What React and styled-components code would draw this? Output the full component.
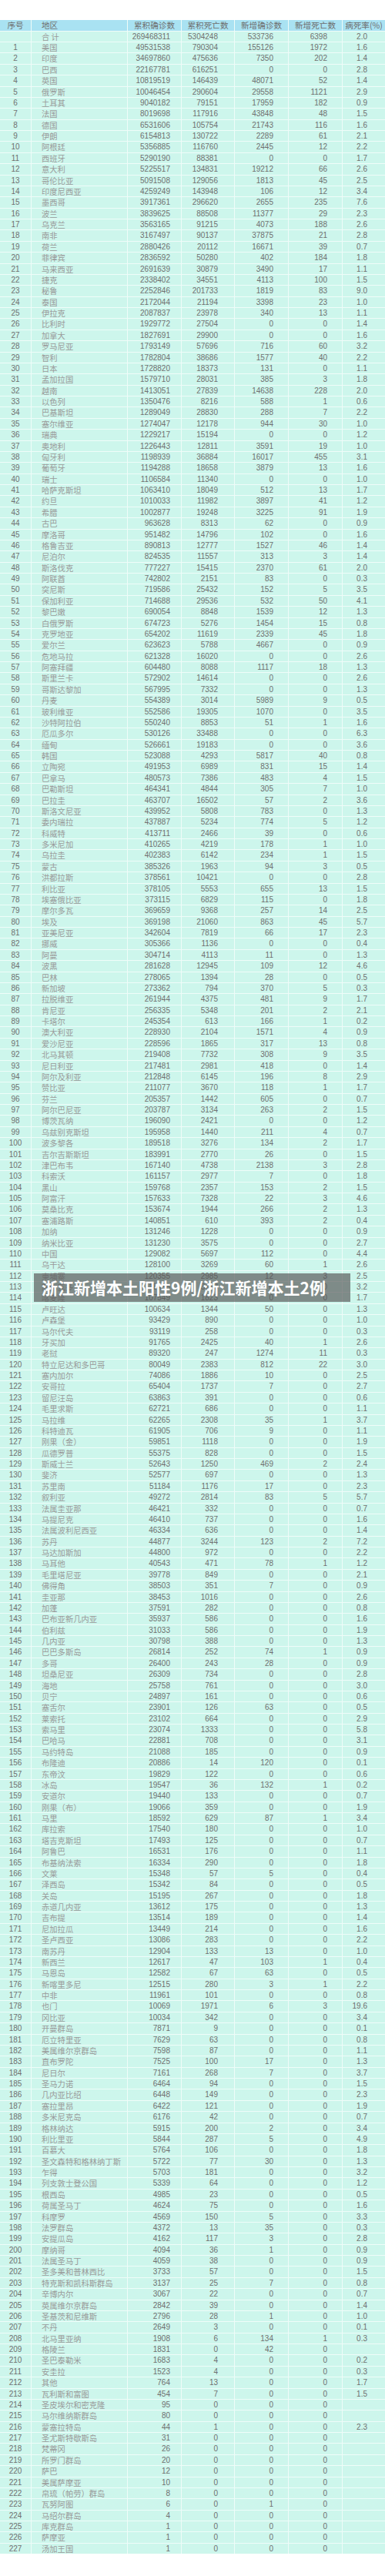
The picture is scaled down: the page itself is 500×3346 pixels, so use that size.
import React from 'react'

import styled, { createGlobalStyle } from 'styled-components'

const raw = `1|美国|49531538|790304|155126|1972|1.6
2|印度|34697860|475636|7350|202|1.4
3|巴西|22167781|616251|0|0|2.8
4|英国|10819519|146439|48071|52|1.4
5|俄罗斯|10046454|290604|29558|1121|2.9
6|土耳其|9040182|79151|17959|182|0.9
7|法国|8019698|117916|43848|48|1.5
8|德国|6531606|105754|21743|116|1.6
9|伊朗|6154813|130722|2289|61|2.1
10|阿根廷|5356885|116760|2445|12|2.2
11|西班牙|5290190|88381|0|0|1.7
12|意大利|5225517|134831|19212|66|2.6
13|哥伦比亚|5091508|129056|1813|45|2.5
14|印度尼西亚|4259249|143948|106|12|3.4
15|墨西哥|3917361|296620|2655|235|7.6
16|波兰|3839625|88508|11377|29|2.3
17|乌克兰|3563165|91215|4073|188|2.6
18|南非|3167497|90137|37875|21|2.8
19|荷兰|2880426|20112|16671|39|0.7
20|菲律宾|2836592|50280|402|184|1.8
21|马来西亚|2691639|30879|3490|17|1.1
22|捷克|2338402|34551|4113|100|1.5
23|秘鲁|2252846|201733|1819|83|9.0
24|泰国|2172044|21194|3398|23|1.0
25|伊拉克|2087837|23978|340|13|1.1
26|比利时|1929772|27504|0|0|1.4
27|加拿大|1827691|29900|0|0|1.6
28|罗马尼亚|1793149|57696|716|60|3.2
29|智利|1782804|38686|1577|40|2.2
30|日本|1728820|18373|131|0|1.1
31|孟加拉国|1579710|28031|385|3|1.8
32|越南|1413051|27839|14638|228|2.0
33|以色列|1350476|8216|588|1|0.6
34|巴基斯坦|1289049|28830|288|7|2.2
35|塞尔维亚|1274047|12178|944|30|1.0
36|瑞典|1229217|15194|0|0|1.2
37|奥地利|1226443|12811|3591|19|1.0
38|匈牙利|1198939|36884|16017|455|3.1
39|葡萄牙|1194288|18658|3879|13|1.6
40|瑞士|1106584|11340|0|0|1.0
41|哈萨克斯坦|1063410|18049|512|13|1.7
42|约旦|1010033|11982|3897|41|1.2
43|希腊|1002877|19248|3225|91|1.9
44|古巴|963628|8313|62|0|0.9
45|摩洛哥|951482|14796|102|0|1.6
46|格鲁吉亚|890813|12777|1527|46|1.4
47|尼泊尔|824535|11557|313|3|1.4
48|斯洛伐克|777227|15415|2370|61|2.0
49|阿联酋|742802|2151|83|0|0.3
50|突尼斯|719586|25432|152|5|3.5
51|保加利亚|714688|29536|532|50|4.1
52|黎巴嫩|690054|8848|1539|12|1.3
53|白俄罗斯|674723|5276|1454|15|0.8
54|克罗地亚|654202|11619|2339|45|1.8
55|爱尔兰|623623|5788|4667|0|0.9
56|危地马拉|621328|16020|0|0|2.6
57|阿塞拜疆|604480|8088|1117|18|1.3
58|斯里兰卡|572902|14614|0|0|2.6
59|哥斯达黎加|567995|7332|0|0|1.3
60|丹麦|554389|3014|5989|9|0.5
61|玻利维亚|552586|19305|1070|0|3.5
62|沙特阿拉伯|550240|8853|51|1|1.6
63|厄瓜多尔|530126|33488|0|0|6.3
64|缅甸|526661|19183|0|0|3.6
65|韩国|523088|4293|5817|40|0.8
66|立陶宛|491953|6989|831|15|1.4
67|巴拿马|480573|7386|483|4|1.5
68|巴勒斯坦|464341|4844|305|7|1.0
69|巴拉圭|463707|16502|57|2|3.6
70|斯洛文尼亚|439952|5808|783|0|1.3
71|委内瑞拉|437887|5234|774|5|1.2
72|科威特|413711|2466|39|0|0.6
73|多米尼加|410265|4219|178|1|1.0
74|乌拉圭|402383|6142|234|1|1.5
75|蒙古|385326|1963|94|3|0.5
76|洪都拉斯|378561|10421|0|0|2.8
77|利比亚|378105|5553|655|13|1.5
78|埃塞俄比亚|373115|6829|115|0|1.8
79|摩尔多瓦|369659|9368|257|14|2.5
80|埃及|369198|21060|863|45|5.7
81|亚美尼亚|342604|7819|66|17|2.3
82|挪威|305366|1136|0|0|0.4
83|阿曼|304714|4113|11|0|1.3
84|波黑|281628|12945|109|12|4.6
85|巴林|278065|1394|28|0|0.5
86|新加坡|273362|794|370|5|0.3
87|拉脱维亚|261944|4375|481|9|1.7
88|肯尼亚|256335|5348|201|2|2.1
89|卡塔尔|245354|613|166|1|0.2
90|澳大利亚|228930|2104|1571|4|0.9
91|爱沙尼亚|228596|1865|317|13|0.8
92|北马其顿|219408|7732|308|9|3.5
93|尼日利亚|217481|2981|418|0|1.4
94|阿尔及利亚|212848|6145|196|8|2.9
95|赞比亚|211077|3670|118|1|1.7
96|芬兰|205357|1442|605|0|0.7
97|阿尔巴尼亚|203787|3134|263|2|1.5
98|博茨瓦纳|196090|2421|0|0|1.2
99|乌兹别克斯坦|195958|1440|211|4|0.7
100|波多黎各|189518|3276|134|2|1.7
101|吉尔吉斯斯坦|183991|2770|26|0|1.5
102|津巴布韦|167140|4738|2138|3|2.8
103|科索沃|161157|2977|7|0|1.8
104|黑山|159768|2357|153|2|1.5
105|阿富汗|157633|7328|22|3|4.6
106|莫桑比克|153674|1944|266|2|1.3
107|塞浦路斯|140851|610|393|2|0.4
108|加纳|131246|1228|0|0|0.9
109|纳米比亚|131230|3575|0|0|2.7
110|中国|129082|5697|112|0|4.4
111|乌干达|128100|3269|60|1|2.6
112|柬埔寨|120355|2985|12|3|2.5
113|萨尔瓦多|118436|3783|0|0|3.2
114|喀麦隆|107549|1823|0|0|1.7
115|卢旺达|100634|1344|50|0|1.3
116|卢森堡|93429|890|0|0|1.0
117|马尔代夫|93119|258|0|0|0.3
118|牙买加|91765|2425|40|1|2.6
119|老挝|89320|247|1274|11|0.3
120|特立尼达和多巴哥|80049|2383|812|22|3.0
121|塞内加尔|74086|1886|10|0|2.5
122|安哥拉|65404|1737|7|0|2.7
123|留尼汪岛|63863|391|0|0|0.6
124|毛里求斯|62721|686|0|0|1.1
125|马拉维|62265|2308|35|1|3.7
126|科特迪瓦|61905|706|9|0|1.1
127|刚果（金）|59851|1118|0|0|1.9
128|瓜德罗普|55375|828|0|0|1.5
129|斯威士兰|52643|1250|469|2|2.4
130|斐济|52577|697|0|0|1.3
131|苏里南|51184|1176|17|0|2.3
132|叙利亚|49272|2814|83|5|5.7
133|法属圭亚那|46421|332|0|0|0.7
134|马提尼克|46410|737|0|0|1.6
135|法属波利尼西亚|46334|636|0|0|1.4
136|苏丹|44877|3244|123|2|7.2
137|马达加斯加|44800|972|0|0|2.2
138|马耳他|40543|471|78|1|1.2
139|毛里塔尼亚|39778|849|0|0|2.1
140|佛得角|38503|351|7|0|0.9
141|圭亚那|38453|1016|0|0|2.6
142|加蓬|37591|282|0|0|0.8
143|巴布亚新几内亚|35937|586|0|0|1.6
144|伯利兹|31033|586|0|0|1.9
145|几内亚|30798|388|0|0|1.3
146|巴巴多斯岛|26814|252|74|1|0.9
147|多哥|26400|243|28|0|0.9
148|坦桑尼亚|26309|734|0|0|2.8
149|海地|25758|761|0|0|3.0
150|贝宁|24897|161|0|0|0.6
151|塞舌尔|23901|126|63|0|0.5
152|莱索托|23102|664|0|0|2.9
153|索马里|23074|1333|0|0|5.8
154|巴哈马|22881|708|0|0|3.1
155|马约特岛|21088|185|0|0|0.9
156|布隆迪|20886|14|120|0|0.1
157|东帝汶|19829|122|0|0|0.6
158|冰岛|19547|36|132|1|0.2
159|安道尔|19440|133|0|0|0.7
160|刚果（布）|19066|359|0|0|1.9
161|马里|18592|629|87|1|3.4
162|库拉索|17540|180|0|0|1.0
163|塔吉克斯坦|17493|125|0|0|0.7
164|阿鲁巴|16531|176|0|0|1.1
165|布基纳法索|16334|290|0|0|1.8
166|文莱|15348|57|5|0|0.4
167|泽西岛|15342|84|0|0|0.5
168|关岛|15195|267|0|0|1.8
169|赤道几内亚|13612|175|0|0|1.3
170|吉布提|13514|189|0|0|1.4
171|尼加拉瓜|13449|214|0|0|1.6
172|圣卢西亚|13086|283|0|0|2.2
173|南苏丹|12904|133|13|0|1.0
174|新西兰|12617|47|103|1|0.4
175|马恩岛|12582|67|63|0|0.5
176|新喀里多尼|12515|280|3|1|2.2
177|中非|11961|101|0|0|0.8
178|也门|10069|1971|6|3|19.6
179|冈比亚|10034|342|0|0|3.4
180|开曼群岛|7871|9|0|0|0.1
181|厄立特里亚|7629|63|0|0|0.8
182|美属维尔京群岛|7598|87|0|0|1.1
183|直布罗陀|7525|100|17|0|1.3
184|尼日尔|7161|268|7|0|3.7
185|圣马力诺|6464|94|0|0|1.5
186|几内亚比绍|6448|149|0|0|2.3
187|塞拉里昂|6422|121|0|0|1.9
188|多米尼克岛|6176|42|0|0|0.7
189|格林纳达|5915|200|2|0|3.4
190|利比里亚|5844|287|5|0|4.9
191|百慕大|5764|106|0|0|1.8
192|圣文森特和格林纳丁斯|5722|77|30|0|1.3
193|乍得|5703|181|0|0|3.2
194|列支敦士登公国|5339|64|0|0|1.2
195|根西岛|4985|23|0|0|0.5
196|荷属圣马丁|4624|75|0|0|1.6
197|科摩罗|4569|150|5|0|3.3
198|法罗群岛|4372|13|35|0|0.3
199|安提瓜岛|4162|117|3|0|2.8
200|摩纳哥|4094|36|1|0|0.9
201|法属圣马丁|4059|38|0|0|0.9
202|圣多美和普林西比|3733|57|0|0|1.5
203|特克斯和凯科斯群岛|3137|25|7|0|0.8
204|辛博内尔|3067|22|0|0|0.7
205|英属维尔京群岛|2842|39|0|0|1.4
206|圣基茨和尼维斯|2796|28|1|0|1.0
207|不丹|2649|3|0|0|0.1
208|北马里亚纳|1908|6|134|1|0.3
209|格陵兰|1831|0|42|0|
210|圣巴泰勒米|1683|4|0|0|0.2
211|安圭拉|1523|4|0|0|0.3
212|其他|764|13|0|0|1.7
213|瓦利斯和富图|454|7|0|0|1.5
214|圣皮埃尔和密克隆|95|0|0|0|
215|马尔维纳斯群岛|80|0|0|0|
216|蒙塞拉特岛|44|1|0|0|2.3
217|圣尤斯特歇斯岛|31|0|0|0|
218|梵蒂冈|26|0|0|0|
219|所罗门群岛|20|0|0|0|
220|萨巴|12|0|0|0|
221|美属萨摩亚|10|0|0|0|
222|帛琉（帕劳）群岛|8|0|0|0|
223|瓦努阿图|6|0|1|0|
224|马绍尔群岛|4|0|0|0|
225|库克群岛|1|0|0|0|
226|萨摩亚|1|0|0|0|
227|汤加王国|1|0|0|0|`

const rows = raw.split('\n').map(line => line.split('|'))

const total = ['', '合 计', '269468311', '5304248', '533736', '6398', '2.0']

const headers = ['序号', '地区', '累积确诊数', '累积死亡数', '新增确诊数', '新增死亡数', '病死率(%)']

const DataRow = ({ cells }) => (
  <Row>
    <IndexCell>{cells[0]}</IndexCell>
    <NameCell>{cells[1]}</NameCell>
    <NumCell pad={14}>{cells[2]}</NumCell>
    <NumCell pad={21}>{cells[3]}</NumCell>
    <NumCell pad={19}>{cells[4]}</NumCell>
    <NumCell pad={19}>{cells[5]}</NumCell>
    <NumCell pad={23}>{cells[6]}</NumCell>
  </Row>
)

export default () => {
  return (
    <>
      <GlobalStyle />
      <Page>
        <Table>
          <HeadRow>
            {headers.map((h, i) => (
              <HeadCell key={h} left={i === 1}>{h}</HeadCell>
            ))}
          </HeadRow>
          <DataRow cells={total} />
          {rows.map(r => <DataRow key={r[0]} cells={r} />)}
        </Table>
        <Banner>浙江新增本土阳性9例/浙江新增本土2例</Banner>
      </Page>
    </>
  )
}

const GlobalStyle = createGlobalStyle`
  body {
    margin: 0;
    background: #fff;
    font-family: "Liberation Sans", Arial, sans-serif;
  }
`

const Page = styled.div`
  position: relative;
  width: 500px;
  padding: 26px 0;
`

const Table = styled.div`
  display: flex;
  flex-direction: column;
  gap: 1px;
  background-color: #effcf9;
`

const Row = styled.div`
  display: grid;
  grid-template-columns: 40px 124px 69px 68px 69px 69px 1fr;
  column-gap: 1px;
  height: 13.38px;
`

const HeadRow = styled(Row)`
  height: 13.7px;
`

const HeadCell = styled.div`
  background-color: #a9e2f2;
  color: #6f6f6f;
  font-family: "Noto Sans CJK SC", sans-serif;
  font-size: 10.6px;
  line-height: 13.7px;
  text-align: ${({ left }) => left ? 'left' : 'center'};
  padding-left: ${({ left }) => left ? '13px' : '0'};
  white-space: nowrap;
`

const Cell = styled.div`
  background-color: #cdf6ec;
  color: #707070;
  font-size: 10px;
  line-height: 13.38px;
  white-space: nowrap;
  overflow: hidden;
`

const IndexCell = styled(Cell)`
  text-align: center;
`

const NameCell = styled(Cell)`
  padding-left: 13px;
  color: #9a9a9a;
  font-family: "Noto Sans CJK SC", sans-serif;
  font-size: 10.3px;
`

const NumCell = styled(Cell)`
  text-align: right;
  padding-right: ${({ pad }) => pad}px;
`

const Banner = styled.div`
  position: absolute;
  left: 44px;
  top: 1654px;
  width: 411px;
  height: 37px;
  box-sizing: border-box;
  padding-left: 10px;
  background-color: rgba(88, 88, 88, 0.68);
  color: #fff;
  font-family: "Noto Sans CJK SC", sans-serif;
  font-weight: 700;
  font-size: 21px;
  line-height: 36px;
  white-space: nowrap;
`
